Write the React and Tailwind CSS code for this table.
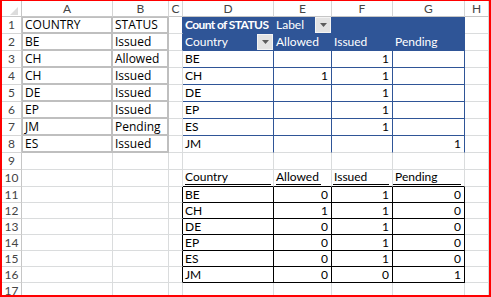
import React from 'react';

const LETTERS = ['A', 'B', 'C', 'D', 'E', 'F', 'G', 'H'];

const source = [
  ['COUNTRY', 'STATUS'],
  ['BE', 'Issued'],
  ['CH', 'Allowed'],
  ['CH', 'Issued'],
  ['DE', 'Issued'],
  ['EP', 'Issued'],
  ['JM', 'Pending'],
  ['ES', 'Issued'],
];

// pivot body: country, allowed, issued, pending (blank = no count)
const pivot = [
  ['BE', '', '1', ''],
  ['CH', '1', '1', ''],
  ['DE', '', '1', ''],
  ['EP', '', '1', ''],
  ['ES', '', '1', ''],
  ['JM', '', '', '1'],
];

const counts = [
  ['BE', 0, 1, 0],
  ['CH', 1, 1, 0],
  ['DE', 0, 1, 0],
  ['EP', 0, 1, 0],
  ['ES', 0, 1, 0],
  ['JM', 0, 0, 1],
];

const BASE = 'flex items-center min-w-0 overflow-hidden whitespace-nowrap border-r border-b';
const GRID = 'border-r-[#dadcdd] border-b-[#dadcdd]';
const CALIBRI = "font-['Lato',sans-serif] text-[12px] leading-[14px] text-black";
const SEGOE = "font-['Open_Sans',sans-serif] text-[12px] leading-[14px] text-black";

const Cell = ({ className, children }) => <div className={`${BASE} ${className}`}>{children}</div>;

const Dropdown = () => (
  <span className="ml-auto flex h-[16px] w-[16px] shrink-0 items-center justify-center border border-[#f4f4f4] bg-[#e3e3e3]">
    <svg width="7" height="4" viewBox="0 0 7 4">
      <polygon points="0,0 7,0 3.5,4" fill="#5c5c5c" />
    </svg>
  </span>
);

const HeaderRow = () => (
  <>
    <Cell className="items-end justify-end border-r-[#c6c6c6] border-b-[#c6c6c6] bg-white pr-[3px] pb-[1px]">
      <svg width="8" height="8" viewBox="0 0 8 8">
        <polygon points="8,0 8,8 0,8" fill="#dcdcdc" />
      </svg>
    </Cell>
    {LETTERS.map((l) => (
      <Cell
        key={l}
        className="justify-center border-r-[#d5d5d5] border-b-[#c6c6c6] bg-white font-['Lato',sans-serif] text-[12px] text-[#444]"
      >
        {l}
      </Cell>
    ))}
  </>
);

const sourceCell = (r, c) => {
  const text = source[r - 1][c];
  const edge = r === 1 ? 'border-t border-t-[#bfbfbf]' : '';
  const left = c === 0 ? 'border-l border-l-[#bfbfbf]' : '';
  return (
    <Cell key={c} className={`border-r-2 border-b-2 border-r-[#bfbfbf] border-b-[#bfbfbf] ${edge} ${left} pl-[2px] ${SEGOE}`}>
      {text}
    </Cell>
  );
};

const pivotHeadCell = (r, c) => {
  const k = c - 3;
  let content = null;
  if (r === 1 && k === 0) content = <span className="font-bold tracking-[-0.6px]">Count of STATUS</span>;
  if (r === 1 && k === 1) content = <><span>Label</span><Dropdown /></>;
  if (r === 2 && k === 0) content = <><span>Country</span><Dropdown /></>;
  if (r === 2 && k > 0) content = ['Allowed', 'Issued', 'Pending'][k - 1];
  return (
    <Cell
      key={c}
      className="border-r-[#2f5597] border-b-[#2f5597] bg-[#2f5597] pl-[2px] font-['Lato',sans-serif] text-[12px] leading-[14px] text-white"
    >
      {content}
    </Cell>
  );
};

const pivotBodyCell = (r, c) => {
  const k = c - 3;
  const val = pivot[r - 3][k];
  const bottom = r === 8 ? 'border-b-[#dadcdd]' : 'border-b-[#2f5597]';
  const align = k === 0 ? 'pl-[2px]' : 'justify-end pr-[3px]';
  return (
    <Cell key={c} className={`border-r-[#2f5597] ${bottom} ${align} ${CALIBRI}`}>
      {val}
    </Cell>
  );
};

// accounting-style underlined headings above the count table
const underlines = [
  { label: 'Country', line: 'ml-[2px] mr-[2px]' },
  { label: 'Allowed', line: 'ml-[2px] mr-[10px]' },
  { label: 'Issued', line: 'ml-[1px] mr-[3px]' },
  { label: 'Pending', line: 'ml-0 mr-[3px]' },
];

const headingCell = (c) => {
  const u = underlines[c - 3];
  return (
    <div key={c} className={`flex min-w-0 flex-col justify-end overflow-hidden border-r border-b border-r-[#dadcdd] border-b-black ${CALIBRI}`}>
      <span className="pl-[2px]">{u.label}</span>
      <div className={`mb-[1px] h-0 border-b border-b-black ${u.line}`} />
    </div>
  );
};

const countCell = (r, c) => {
  const k = c - 3;
  const val = counts[r - 11][k];
  const align = k === 0 ? 'pl-[2px]' : 'justify-end pr-[3px]';
  return (
    <Cell key={c} className={`border-r-black border-b-black ${align} ${CALIBRI}`}>
      {val}
    </Cell>
  );
};

const sheetCell = (r, c) => {
  if (c <= 1 && r <= 8) return sourceCell(r, c);
  if (c === 2) {
    let right = 'border-r-[#dadcdd]';
    if (r <= 2) right = 'border-r-[#2f5597]';
    if (r >= 11 && r <= 16) right = 'border-r-black';
    return <Cell key={c} className={`${right} border-b-[#dadcdd]`} />;
  }
  if (c >= 3 && c <= 6) {
    if (r <= 2) return pivotHeadCell(r, c);
    if (r <= 8) return pivotBodyCell(r, c);
    if (r === 10) return headingCell(c);
    if (r >= 11 && r <= 16) return countCell(r, c);
  }
  return <Cell key={c} className={GRID} />;
};

const SheetRow = ({ r }) => (
  <>
    <Cell className="justify-center border-r-[#c6c6c6] border-b-[#d5d5d5] bg-white font-['Lato',sans-serif] text-[12px] text-[#444]">
      {r}
    </Cell>
    {[0, 1, 2, 3, 4, 5, 6, 7].map((c) => sheetCell(r, c))}
  </>
);

export default function App() {
  const rows = Array.from({ length: 17 }, (_, i) => i + 1);
  return (
    <div className="h-[297px] w-[491px] border-t border-r-2 border-b-2 border-l-2 border-[#ff0000] bg-white">
      <div className="h-full overflow-hidden">
        <div className="grid grid-cols-[20px_91px_56px_14px_91px_58px_61px_72px_24px] grid-rows-[16px_repeat(10,17px)_repeat(7,16px)]">
          <HeaderRow />
          {rows.map((r) => (
            <SheetRow key={r} r={r} />
          ))}
        </div>
      </div>
    </div>
  );
}
